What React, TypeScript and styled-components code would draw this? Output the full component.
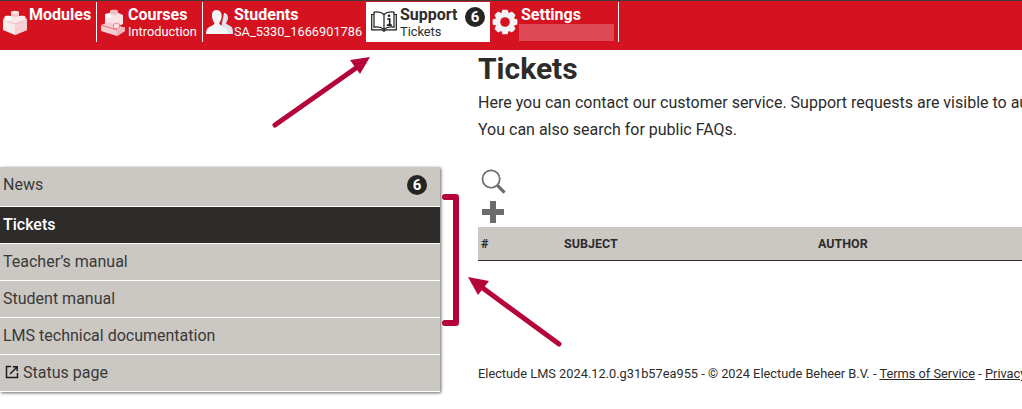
import styled, { createGlobalStyle } from 'styled-components';
import type { ReactNode } from 'react';

const GlobalStyle = createGlobalStyle`
  html,
  body {
    margin: 0;
    padding: 0;
    background: #fff;
  }

  body {
    width: 1022px;
    height: 409px;
    overflow: hidden;
    font-family: Roboto, 'Liberation Sans', sans-serif;
    color: #2d2c2b;
  }
`;

const gearPath = () => {
  const points: string[] = [];
  for (let i = 0; i < 8; i++) {
    const a = (i * Math.PI) / 4;
    [
      [a - 0.42, 9.4],
      [a - 0.2, 12.6],
      [a + 0.2, 12.6],
      [a + 0.42, 9.4],
    ].forEach(([t, r]) => {
      points.push(`${(13 + r * Math.sin(t)).toFixed(2)} ${(13 - r * Math.cos(t)).toFixed(2)}`);
    });
  }
  return `M${points.join('L')}z`;
};

const BrickIcon = () => (
  <svg width="26" height="26" viewBox="0 0 26 26">
    <path d="M1 10 13 5l12 5v11l-12 5-12-5z" fill="#fbeaeb" />
    <path d="M13 15v11l12-5V10z" fill="#f4d0d3" />
    <path d="M1 10l12 5 12-5" fill="none" stroke="#e9a9ae" strokeWidth=".8" />
    <path d="M9 3.500c0-1.800 8-1.800 8 0v3c0 1.800-8 1.800-8 0z" fill="#f1c6ca" />
    <ellipse cx="13" cy="3.500" rx="4" ry="1.800" fill="#fbe6e8" />
    <path d="M2.500 8c0-1.600 6.500-1.600 6.500 0v2.500c0 1.600-6.500 1.600-6.500 0z" fill="#fff" />
    <path d="M17 8c0-1.600 6.500-1.600 6.500 0v2.500c0 1.600-6.500 1.600-6.500 0z" fill="#fbe6e8" />
  </svg>
);

const BricksIcon = () => (
  <svg width="26" height="28" viewBox="0 0 26 28">
    <path d="M5 7l9-4 9 4v9l-9 4-9-4z" fill="#fbe3e5" />
    <path d="M10 3c0-1.600 8-1.600 8 0v2.500c0 1.600-8 1.600-8 0z" fill="#f1c0c5" />
    <path d="M5 6.500c0-1.500 6-1.500 6 0v2.500c0 1.500-6 1.500-6 0z" fill="#fff" />
    <path d="M1 17l8-3 16 6v3l-8 5-16-5z" fill="#f6cdd0" />
    <path d="M17 22v6l8-5v-4z" fill="#efb3b8" />
    <path d="M1 17l16 5" fill="none" stroke="#d5121f" strokeWidth=".5" />
    <path d="M13.500 16.500c0-1.500 6-1.500 6 0v3c0 1.500-6 1.500-6 0z" fill="#f9dfe1" stroke="#d5121f" strokeWidth=".4" />
  </svg>
);

const StudentsIcon = () => (
  <svg width="27" height="24" viewBox="0 0 27 24">
    <path d="M18 3c2.800 0 4.300 2.600 3.900 5.500-.3 2-1 3.400-1.900 4.400.3 1.800 4 2.300 5.700 4.100.8.900 1.300 3.500 1.300 7H21c0-3-.8-5.500-3-7-.8-.6-1.800-1-2.500-1.500z" fill="#dfe3ec" />
    <path d="M10.500 0c3.700 0 5.700 3.200 5.100 7.200-.4 2.600-1.400 4.500-2.400 5.700.4 2.200 3.500 2.800 6 4.700 1.500 1.200 2.800 3.400 2.800 6.400H0c0-3 1-5.200 2.500-6.400 2.500-1.900 5.600-2.500 6-4.700-1-1.200-2-3.100-2.400-5.700C5.500 3.200 6.800 0 10.500 0z" fill="#f3f5f9" />
  </svg>
);

const BookIcon = () => (
  <svg width="26" height="21" viewBox="0 0 26 21" fill="none" stroke="#1d1d1b" strokeWidth="1.200">
    <path d="M13 3.500C10.500 1.200 6.500.6 3 1.200v15c3.500-.6 7.500 0 10 2.300 2.500-2.300 6.500-2.900 10-2.300v-15c-3.500-.6-7.500 0-10 2.300z" fill="#fff" />
    <path d="M13 3.500v15" />
    <path d="M3 3.500H.7v15.300h10.300l2 1.500 2-1.500h10.300V3.500H23" />
    <circle cx="18" cy="4.800" r="1.300" fill="#1d1d1b" stroke="none" />
    <path d="M16.200 8h2.500v6M15.800 14.200h5" strokeWidth="1.700" />
  </svg>
);

const GearIcon = () => (
  <svg width="26" height="26" viewBox="0 0 26 26">
    <path d={gearPath()} fill="#f3f4f8" />
    <circle cx="13" cy="13" r="4.800" fill="#d5121f" />
  </svg>
);

const ExternalIcon = () => (
  <svg width="14" height="14" viewBox="0 0 14 14" fill="none" stroke="#1f1f1e" strokeWidth="1.500">
    <path d="M6 1.500H1.500v11h11V8" />
    <path d="M5 9 11.500 2.500M7.800 1.800h4.400v4.400" />
  </svg>
);

const SearchIcon = () => (
  <svg width="25" height="25" viewBox="0 0 26 26" fill="none" stroke="#6d6c6a">
    <circle cx="10.500" cy="10.500" r="9" strokeWidth="1.800" />
    <path d="M17 17l7.500 7.500" strokeWidth="3.400" />
  </svg>
);

const PlusIcon = () => (
  <svg width="24" height="22" viewBox="0 0 24 22">
    <path d="M9 0h6v8h8v6h-8v8H9v-8H1V8h8z" fill="#6d6c6a" />
  </svg>
);

const Navigation = () => (
  <Header>
    <NavItem $width={97}>
      <IconSlot $width={28}><BrickIcon /></IconSlot>
      <NavText><NavTitle>Modules</NavTitle></NavText>
    </NavItem>
    <NavItem $width={106}>
      <IconSlot $width={30}><BricksIcon /></IconSlot>
      <NavText>
        <NavTitle>Courses</NavTitle>
        <NavSub>Introduction</NavSub>
      </NavText>
    </NavItem>
    <NavItem $width={164}>
      <IconSlot $width={30}><StudentsIcon /></IconSlot>
      <NavText>
        <NavTitle>Students</NavTitle>
        <NavSub>SA_5330_1666901786</NavSub>
      </NavText>
    </NavItem>
    <NavItem $width={123} $active>
      <IconSlot $width={32}><BookIcon /></IconSlot>
      <NavText>
        <NavTitle>Support</NavTitle>
        <NavSub>Tickets</NavSub>
      </NavText>
      <NavBadge>6</NavBadge>
    </NavItem>
    <NavItem $width={129}>
      <IconSlot $width={28}><GearIcon /></IconSlot>
      <NavText $offset={2}>
        <NavTitle>Settings</NavTitle>
        <HiddenName />
      </NavText>
    </NavItem>
  </Header>
);

const MenuRow = ({ active, children }: { active?: boolean; children: ReactNode }) => (
  <MenuItem $active={active}>{children}</MenuItem>
);

const App = () => (
  <>
    <GlobalStyle />
    <Page>
      <Navigation />
      <Body>
        <Sidebar>
          <Menu>
            <MenuRow>
              News
              <MenuBadge>6</MenuBadge>
            </MenuRow>
            <MenuRow active>Tickets</MenuRow>
            <MenuRow>Teacher’s manual</MenuRow>
            <MenuRow>Student manual</MenuRow>
            <MenuRow>LMS technical documentation</MenuRow>
            <MenuRow>
              <StatusIcon><ExternalIcon /></StatusIcon>
              Status page
            </MenuRow>
          </Menu>
        </Sidebar>
        <Main>
          <Title>Tickets</Title>
          <Intro>Here you can contact our customer service. Support requests are visible to authorized staff only.</Intro>
          <Intro>You can also search for public FAQs.</Intro>
          <Tools>
            <SearchIcon />
            <PlusIcon />
          </Tools>
          <TableHead>
            <span>#</span>
            <span>SUBJECT</span>
            <span>AUTHOR</span>
          </TableHead>
          <Footer>
            Electude LMS 2024.12.0.g31b57ea955 - © 2024 Electude Beheer B.V. - <u>Terms of Service</u> - <u>Privacy</u>
          </Footer>
        </Main>
      </Body>
      {/* annotations drawn over the screenshot */}
      <Annotations viewBox="0 0 1022 409" width="1022" height="409">
        <path d="M275 125 356 68" stroke="#b5043a" strokeWidth="5" strokeLinecap="round" fill="none" />
        <path d="M370 57 350 60 360 74z" fill="#b5043a" />
        <path d="M559 344 480 286" stroke="#b5043a" strokeWidth="5" strokeLinecap="round" fill="none" />
        <path d="M468 277 489 281 478 295z" fill="#b5043a" />
        <path d="M445 197h11v126h-11" stroke="#b5043a" strokeWidth="6" strokeLinecap="round" strokeLinejoin="round" fill="none" />
      </Annotations>
    </Page>
  </>
);

const Page = styled.div`
  position: relative;
  width: 1022px;
  height: 409px;
  overflow: hidden;
`;

const Header = styled.nav`
  display: flex;
  align-items: flex-start;
  box-sizing: border-box;
  height: 50px;
  padding-top: 1px;
  background: #d5121f;
  border-top: 1px solid #3b3b3b;
`;

const NavItem = styled.div<{ $width: number; $active?: boolean }>`
  position: relative;
  display: flex;
  box-sizing: border-box;
  width: ${({ $width }) => $width}px;
  height: 40px;
  padding-left: 1px;
  color: ${({ $active }) => ($active ? '#2d2c2b' : '#fff')};
  background: ${({ $active }) => ($active ? '#fff' : 'transparent')};
  border-right: 1px solid ${({ $active }) => ($active ? 'transparent' : '#fff')};
`;

const IconSlot = styled.div<{ $width: number }>`
  display: flex;
  flex: 0 0 ${({ $width }) => $width}px;
  align-items: center;
  height: 39px;
  justify-content: center;
`;

const NavText = styled.div<{ $offset?: number }>`
  display: flex;
  flex-direction: column;
  margin-left: ${({ $offset }) => $offset ?? 0}px;
`;

const NavTitle = styled.div`
  margin-top: 3px;
  font-size: 16px;
  font-weight: 700;
  line-height: 20px;
`;

const NavSub = styled.div`
  font-size: 12.800px;
  line-height: 14px;
  white-space: nowrap;
`;

const NavBadge = styled.div`
  position: absolute;
  top: 5px;
  left: 98px;
  display: flex;
  align-items: center;
  justify-content: center;
  width: 20px;
  height: 20px;
  font-size: 15px;
  font-weight: 700;
  color: #fff;
  background: #242423;
  border-radius: 50%;
`;

const HiddenName = styled.div`
  width: 95px;
  height: 17px;
  margin: -1px 0 0 -2px;
  background: #e04a58;
`;

const Body = styled.div`
  display: flex;
  height: 359px;
`;

const Sidebar = styled.aside`
  flex: 0 0 478px;
  padding-top: 117px;
`;

const Menu = styled.div`
  width: 440px;
  background: #fff;
  box-shadow: 1px 1px 3px rgba(0, 0, 0, 0.6);
`;

const MenuItem = styled.div<{ $active?: boolean }>`
  display: flex;
  align-items: center;
  gap: 4px;
  box-sizing: border-box;
  height: 37px;
  padding: 0 13px 2px 3px;
  font-size: 16px;
  font-weight: ${({ $active }) => ($active ? 500 : 400)};
  color: ${({ $active }) => ($active ? '#fff' : '#3a3938')};
  background: ${({ $active }) => ($active ? '#2d2c2b' : '#cbc8c4')};
  border-bottom: 1px solid #fff;

  &:first-child {
    height: 40px;
    padding-bottom: 4px;
  }
`;

const StatusIcon = styled.span`
  display: flex;
  margin-left: 2px;
`;

const MenuBadge = styled.span`
  display: flex;
  align-items: center;
  justify-content: center;
  width: 20px;
  height: 20px;
  margin-left: auto;
  font-size: 15px;
  font-weight: 700;
  color: #fff;
  background: #242423;
  border-radius: 50%;
`;

const Main = styled.main`
  flex: 1;
  min-width: 0;
`;

const Title = styled.h1`
  margin: 0 0 2px;
  padding-top: 1px;
  font-size: 30px;
  font-weight: 700;
  line-height: 36px;
  color: #2d2c2b;
`;

const Intro = styled.p`
  margin: 0;
  font-size: 16px;
  line-height: 27px;
  white-space: nowrap;
`;

const Tools = styled.div`
  display: flex;
  flex-direction: column;
  align-items: flex-start;
  gap: 7px;
  padding: 26px 0 4px 3px;
`;

const TableHead = styled.div`
  display: grid;
  grid-template-columns: 83px 254px 1fr;
  align-items: center;
  box-sizing: border-box;
  height: 34px;
  padding-left: 3px;
  font-size: 12.500px;
  font-weight: 700;
  background: #cbc8c4;
  border-bottom: 1px solid #2d2c2b;
`;

const Footer = styled.div`
  margin-top: 105px;
  font-size: 12.800px;
  white-space: nowrap;
`;

const Annotations = styled.svg`
  position: absolute;
  top: 0;
  left: 0;
  pointer-events: none;
`;

export default App;
